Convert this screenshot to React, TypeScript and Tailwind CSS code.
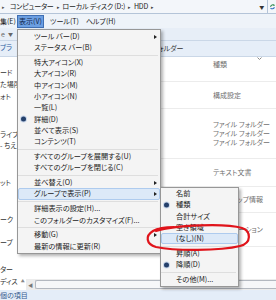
import { type ReactNode } from "react";

const jp =
  "font-['Noto_Sans_CJK_JP','Noto_Sans',sans-serif] [font-feature-settings:'palt']";

type Entry = { label: string; sub?: boolean; dot?: boolean; hot?: boolean } | null;

const viewMenu: Entry[] = [
  { label: "ツール バー(D)", sub: true },
  { label: "ステータス バー(B)" },
  null,
  { label: "特大アイコン(X)" },
  { label: "大アイコン(R)" },
  { label: "中アイコン(M)" },
  { label: "小アイコン(N)" },
  { label: "一覧(L)" },
  { label: "詳細(D)", dot: true },
  { label: "並べて表示(S)" },
  { label: "コンテンツ(T)" },
  null,
  { label: "すべてのグループを展開する(U)" },
  { label: "すべてのグループを閉じる(C)" },
  null,
  { label: "並べ替え(O)", sub: true },
  { label: "グループで表示(P)", sub: true, hot: true },
  null,
  { label: "詳細表示の設定(H)..." },
  { label: "このフォルダーのカスタマイズ(F)..." },
  null,
  { label: "移動(G)", sub: true },
  { label: "最新の情報に更新(R)" },
];

const groupMenu: Entry[] = [
  { label: "名前" },
  { label: "種類", dot: true },
  { label: "合計サイズ" },
  { label: "空き領域" },
  { label: "(なし)(N)", hot: true },
  null,
  { label: "昇順(A)" },
  { label: "降順(D)", dot: true },
  null,
  { label: "その他(M)..." },
];

function Caret() {
  return <span className="h-0 w-0 border-y-[2.5px] border-l-[3px] border-y-transparent border-l-[#222]" />;
}

function Bullet() {
  return (
    <span className="absolute left-[2px] top-1/2 h-[5px] w-[5px] -translate-y-1/2 rounded-full bg-[#24406b] shadow-[0_0_0_1px_#c9d6ea]" />
  );
}

function MenuList({ items, indent }: { items: Entry[]; indent: string }) {
  return (
    <>
      {items.map((item, i) =>
        item === null ? (
          <div key={i} className="flex h-[3.5px] items-center">
            <div className={`${indent} mr-[2px] h-px flex-1 bg-[#dedede]`} />
          </div>
        ) : (
          <div
            key={i}
            className={`relative flex h-[11.3px] items-center justify-between border pr-[2px] ${indent} ${
              item.hot
                ? "rounded-[2px] border-[#aecbee] bg-[#dce9f8]"
                : "border-transparent"
            }`}
          >
            {item.dot && <Bullet />}
            <span className="whitespace-nowrap text-[7.2px] leading-none text-[#1a1a1a]">
              {item.label}
            </span>
            {item.sub && <Caret />}
          </div>
        ),
      )}
    </>
  );
}

function Row({ h, children }: { h: string; children?: ReactNode }) {
  return (
    <div className={`flex ${h} flex-col justify-center border-b border-[#ececec] pl-[187px] text-[7px] leading-[9px] text-[#707070]`}>
      {children}
    </div>
  );
}

export default function App() {
  return (
    <div className={`relative h-[300px] w-[276px] overflow-hidden bg-white ${jp}`}>
      {/* address bar */}
      <div className="flex h-[14px] items-center border-b border-[#b4c4d8] bg-[#f3f6fa] text-[7px] tracking-[-0.2px] text-[#1d1d1d]">
        <span className="ml-[2px] mr-[5px] text-[5px] text-[#555]">▸</span>
        <span>コンピューター</span>
        <span className="mx-[3px] text-[5px] text-[#444]">▸</span>
        <span>ローカル ディスク (D:)</span>
        <span className="mx-[3px] text-[5px] text-[#444]">▸</span>
        <span>HDD</span>
        <span className="ml-[3px] text-[5px] text-[#444]">▸</span>
        <span className="ml-auto mr-[3px] text-[5px] text-[#333]">▼</span>
        <span className="flex h-full w-[9px] items-center border-l border-[#b4c4d8] pl-[1px]">
          <svg width="9" height="9" viewBox="0 0 9 9" fill="none">
            <path d="M2 5 A3 3 0 0 1 7 3" stroke="#2f8a4e" strokeWidth="1.4" />
            <path d="M6 1.5 L7.6 3.2 L5.4 3.6 Z" fill="#2f8a4e" />
            <path d="M7 5.5 A3 3 0 0 1 2 6.5" stroke="#2f6fc4" strokeWidth="1.4" />
          </svg>
        </span>
      </div>

      {/* menu bar */}
      <div className="flex h-[14px] items-center bg-[#eef3f9] text-[7px] text-[#1b1b1b]">
        <span className="w-[17px]">集(E)</span>
        <span className="flex h-[13px] w-[27px] items-center justify-center border border-[#3f6fb3] bg-[#6c9fe2] text-[#13274d]">
          表示(V)
        </span>
        <span className="ml-[6px]">ツール(T)</span>
        <span className="ml-[7px]">ヘルプ(H)</span>
      </div>

      {/* toolbar */}
      <div className="flex h-[12px] items-center bg-[#e7eef7] text-[7px] text-[#666]">
        <span className="ml-[1px]">e</span>
        <span className="ml-[3px] text-[5px]">▼</span>
        <span className="ml-[4px] h-[5px] w-[3px] bg-[#6f9a6a]" />
      </div>

      {/* command bar */}
      <div className="flex h-[17px] items-center border-y border-[#cad7e7] bg-[#e6eef8] text-[7px]">
        <span className="-mt-[3px] text-[#2a5c9f]">ブラ</span>
        <span className="ml-[146px] text-[#333]">ォルダー</span>
      </div>

      {/* body */}
      <div className="flex h-[233px]">
        <div className="flex w-[26px] flex-col text-[7px] leading-[11px] text-[#333]">
          <span className="mt-[10px]">ード</span>
          <span className="mt-[1px]">た場所</span>
          <span className="mt-[1px]">ォト</span>
          <span className="mt-[27px]">ライブ</span>
          <span>- ちえ</span>
          <span className="mt-[26px]">ット</span>
          <span className="mt-[26px]">ーク</span>
          <span className="mt-[12px]">ープ</span>
          <span className="mt-[16px]">ター</span>
          <span className="mt-[1px] flex items-center">
            ディス<span className="ml-[3px] text-[4px] text-[#888]">▲</span>
          </span>
        </div>
        <div className="flex flex-1 flex-col">
          <div className="relative flex h-[25px] flex-col border-b border-[#ececec] pl-[187px] pt-[3px] text-[7px] leading-[8px] text-[#707070]">
            種類
            <svg className="absolute right-[14px] top-0" width="5" height="3" viewBox="0 0 5 3">
              <path d="M0.5 0.5 L2.5 2.5 L4.5 0.5" stroke="#8a8a8a" fill="none" />
            </svg>
          </div>
          <Row h="h-[27px]">構成設定</Row>
          <Row h="h-[50px]">
            <span>ファイル フォルダー</span>
            <span>ファイル フォルダー</span>
            <span>ファイル フォルダー</span>
          </Row>
          <Row h="h-[28px]">テキスト文書</Row>
          <Row h="h-[26px]">セットアップ情報</Row>
          <Row h="h-[34px]">アプリケーション</Row>
          <div className="flex-1" />
          <div className="flex h-[11px] items-center bg-[#ececec]">
            <span className="flex w-[9px] justify-center text-[5px] text-[#777]">◀</span>
            <div className="h-[9px] flex-1 rounded-l-[2px] border border-r-0 border-[#b3b8c0] bg-[#f6f7f9]" />
          </div>
        </div>
      </div>

      {/* status bar */}
      <div className="flex h-[10px] items-center bg-[#e4edf8] text-[7px] text-[#355b8e]">個の項目</div>

      {/* 表示 menu */}
      <div className="absolute left-[17px] top-[29px] w-[144px] border border-[#979797] bg-[#f4f4f4] py-[1px] shadow-[2px_2px_3px_rgba(0,0,0,0.3)]">
        <MenuList items={viewMenu} indent="pl-[15px]" />
      </div>

      {/* グループで表示 submenu */}
      <div className="absolute left-[160px] top-[187px] w-[79px] border border-[#979797] bg-[#f4f4f4] pb-[1px] shadow-[2px_2px_3px_rgba(0,0,0,0.3)]">
        <MenuList items={groupMenu} indent="pl-[14px]" />
      </div>

      {/* red marker circle */}
      <svg className="pointer-events-none absolute left-0 top-0" width="276" height="300" viewBox="0 0 276 300" fill="none">
        <path
          d="M156 231 C175 225 225 223 242 228 C251 231 252 243 240 246 C220 251 175 251 156 247 C146 244 145 236 153 231 C158 228 165 227 174 227"
          stroke="#e0141b"
          strokeWidth="2.2"
          strokeLinecap="round"
        />
      </svg>
    </div>
  );
}
